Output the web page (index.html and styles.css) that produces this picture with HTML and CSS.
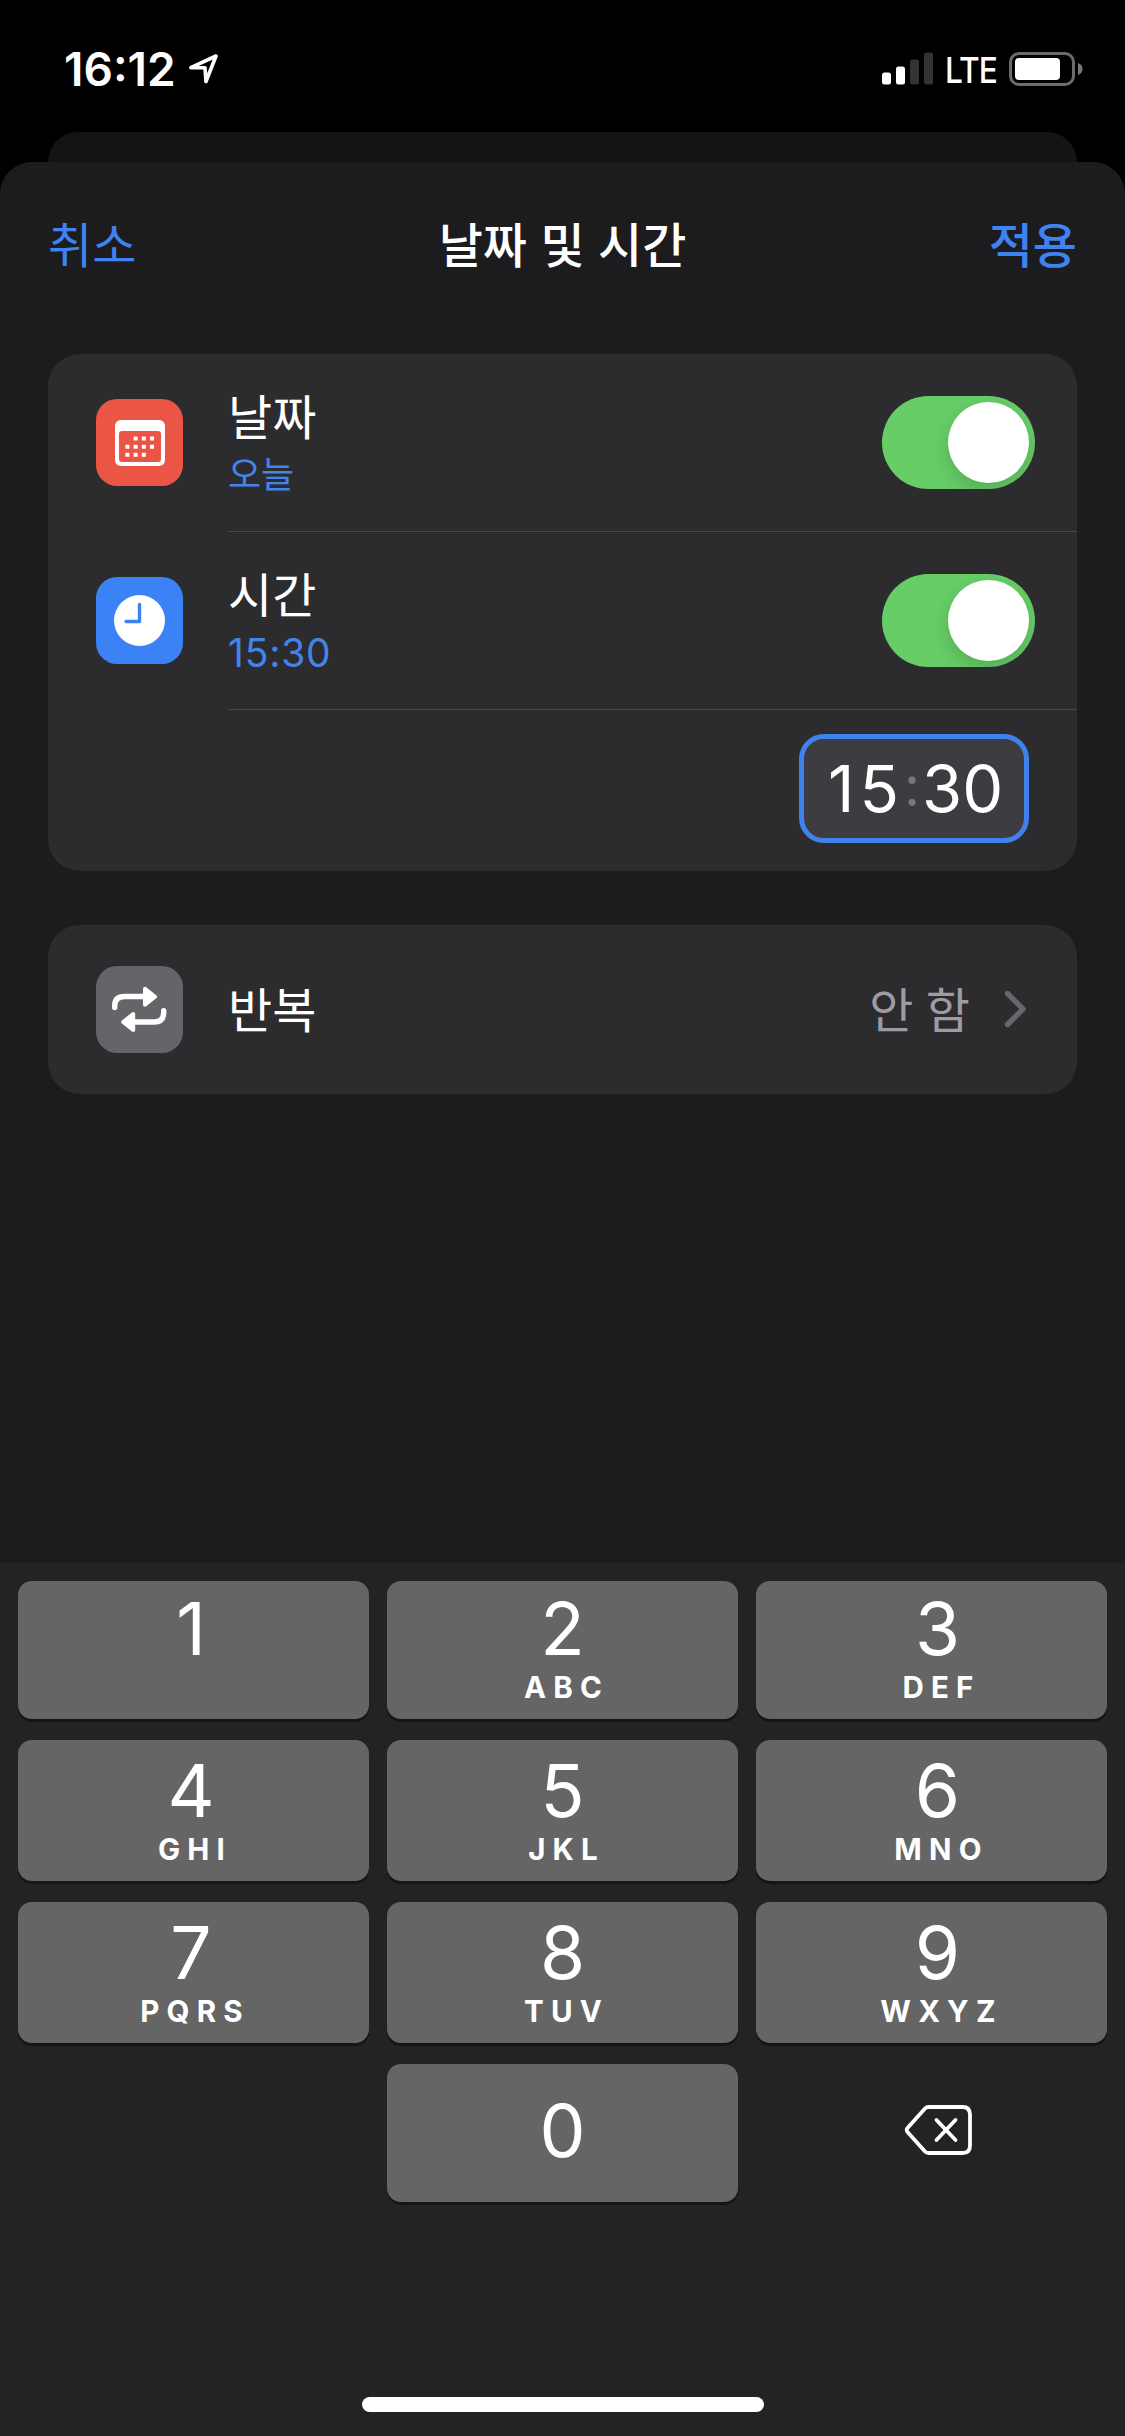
FILE: index.html
```html
<!DOCTYPE html>
<html lang="ko">
<head>
<meta charset="utf-8">
<title>날짜 및 시간</title>
<link rel="stylesheet" href="styles.css">
</head>
<body>
<div class="screen">
  <div class="status">
    <span class="clock">16:12</span>
    <svg class="location" width="33" height="33" viewBox="0 0 33 33"><path d="M3.8 15.6 29 4 19 29.5 18 15.8Z" fill="none" stroke="#fff" stroke-width="3.6" stroke-linejoin="round"/></svg>
    <svg class="signal" width="51" height="33" viewBox="0 0 51 33"><rect y="20.5" width="9" height="12" rx="2.5" fill="#fff"/><rect x="14" y="14.5" width="9" height="18" rx="2.5" fill="#fff"/><rect x="28" y="7.5" width="9" height="25" rx="2.5" fill="#333"/><rect x="42" y=".5" width="9" height="32" rx="2.5" fill="#333"/></svg>
    <span class="network">LTE</span>
    <svg class="battery" width="74" height="34" viewBox="0 0 74 34"><rect x="1.5" y="1.5" width="63" height="31" rx="8.5" fill="none" stroke="#6b6b6b" stroke-width="3"/><rect x="6" y="6" width="45" height="22" rx="4" fill="#fff"/><path d="M69 11q4.500 1.500 4.500 6t-4.500 6z" fill="#777"/></svg>
  </div>
  <div class="back-sheet"></div>
  <main class="sheet">
    <header class="nav">
      <span class="cancel">취소</span>
      <h1 class="title">날짜 및 시간</h1>
      <span class="apply">적용</span>
    </header>
    <section class="card">
      <div class="row">
        <div class="icon red"><svg width="87" height="87" viewBox="0 0 87 87"><path fill="#fff" fill-rule="evenodd" d="M25.500 21H62.500Q69 21 69 27.500V60.500Q69 67 62.500 67H25.500Q19 67 19 60.500V27.500Q19 21 25.500 21ZM26 32Q23 32 23 35V60Q23 63 26 63H62Q65 63 65 60V35Q65 32 62 32Z"/><path stroke="#fff" stroke-width="4" stroke-dasharray="4 4.200" d="M37.600 39.500H60M29.400 47.700H60M29.400 55.700H52"/></svg></div>
        <div class="body"><div class="labels"><span class="label">날짜</span><span class="sub ko">오늘</span></div><span class="switch"><i class="knob"></i></span></div>
      </div>
      <div class="row">
        <div class="icon blue"><svg width="87" height="87" viewBox="0 0 87 87"><circle cx="43.500" cy="43.500" r="25.500" fill="#fff"/><path d="M43.500 27.500V44.500H30" fill="none" stroke="#3b82f4" stroke-width="3.400" stroke-linecap="round" stroke-linejoin="round"/></svg></div>
        <div class="body"><div class="labels"><span class="label">시간</span><span class="sub num">15:30</span></div><span class="switch"><i class="knob"></i></span></div>
      </div>
      <div class="picker"><div class="time"><span class="hour">15</span><span class="colon">:</span><span class="minute">30</span></div></div>
    </section>
    <section class="card repeat">
      <div class="icon gray"><svg width="87" height="87" viewBox="0 0 87 87"><path d="M18.700 41.500V40Q18.700 30.500 28.500 30.500H50M67.700 44.800V46.500Q67.700 56 58 56H37" fill="none" stroke="#fff" stroke-width="5.400" stroke-linecap="round"/><path d="M49 22.800V38.800L59 30.800ZM37.200 48V64L27.200 56Z" fill="#fff" stroke="#fff" stroke-width="4" stroke-linejoin="round"/></svg></div>
      <span class="label">반복</span>
      <span class="value">안 함</span>
      <svg class="chevron" width="24" height="38" viewBox="0 0 24 38"><path d="M3.500 3.500 19 19 3.500 34.500" fill="none" stroke="#68686c" stroke-width="5.400" stroke-linecap="round" stroke-linejoin="round"/></svg>
    </section>
  </main>
  <div class="keyboard">
    <div class="keys">
      <div class="key left"><b>1</b></div>
      <div class="key"><b>2</b><span>ABC</span></div>
      <div class="key right"><b>3</b><span>DEF</span></div>
      <div class="key low left"><b>4</b><span>GHI</span></div>
      <div class="key low"><b>5</b><span>JKL</span></div>
      <div class="key low right"><b>6</b><span>MNO</span></div>
      <div class="key low left"><b>7</b><span>PQRS</span></div>
      <div class="key low"><b>8</b><span>TUV</span></div>
      <div class="key low right"><b>9</b><span>WXYZ</span></div>
      <div></div>
      <div class="key zero"><b>0</b></div>
      <div class="delete"><svg width="70" height="54" viewBox="0 0 70 54"><path d="M24.500 4H58.500Q66 4 66 11.500V42.500Q66 50 58.500 50H24.500Q22.500 50 21 48.500L3.500 29Q2 27 3.500 25L21 5.500Q22.500 4 24.500 4Z" fill="none" stroke="#fff" stroke-width="3.800" stroke-linejoin="round"/><path d="M32.500 17 51.500 37M51.500 17 32.500 37" stroke="#fff" stroke-width="3.800" stroke-linecap="round"/></svg></div>
    </div>
    <div class="home"></div>
  </div>
</div>
</body>
</html>
```
FILE: styles.css
```css
* { box-sizing: border-box; }
body { margin: 0; background: #000; }
.screen {
  display: flex; flex-direction: column;
  width: 1125px; height: 2436px; overflow: hidden;
  background: #000; color: #fff;
  font-family: "Inter", "Noto Sans CJK KR", sans-serif;
}
.status { display: flex; height: 132px; padding: 52px 42px 0 64px; align-items: flex-start; }
.status svg { flex: none; }
.clock { flex: none; width: 123px; font-size: 46px; font-weight: 600; line-height: 35px; white-space: nowrap; }
.signal { margin-left: auto; }
.network { flex: none; width: 63px; margin: 1px 0 0 12px; font-size: 36px; font-weight: 500; line-height: 34px; letter-spacing: -1px; white-space: nowrap; transform: scaleX(.88); transform-origin: left; }
.battery { margin-left: 1px; }
.back-sheet { height: 30px; margin: 0 48px; border-radius: 30px 30px 0 0; background: #141416; }
.sheet { flex: 1; padding: 0 48px; border-radius: 32px 32px 0 0; background: #1c1c1e; }
.nav {
  display: grid; grid-template-columns: 1fr auto 1fr; height: 192px;
  padding-top: 46px; font-size: 48px; line-height: 68px;
  font-family: "Noto Sans CJK KR", sans-serif;
}
.cancel { color: #3e82f3; }
.title { margin: 0; font-size: 48px; font-weight: 500; }
.apply { color: #3e82f3; font-weight: 500; text-align: right; }
.card { border-radius: 32px; background: #2c2c2e; }
.row { display: flex; height: 178px; padding-left: 48px; }
.icon { width: 87px; height: 87px; border-radius: 21px; flex: none; }
.icon svg { display: block; }
.row .icon { margin: 45px 45px 0 0; }
.red { background: #eb5545; }
.blue { background: #3b82f6; }
.gray { background: #656569; }
.body { display: flex; flex: 1; justify-content: space-between; padding: 26px 42px 0 0; border-bottom: 1px solid #48484b; }
.labels { display: flex; flex-direction: column; }
.label { font: 400 48px/68px "Noto Sans CJK KR", sans-serif; }
.sub { color: #4384ec; font-size: 39px; line-height: 48px; white-space: nowrap; }
.ko { font-family: "Noto Sans CJK KR", sans-serif; font-size: 36px; line-height: 48px; }
.num { margin-top: 3px; letter-spacing: .8px; }
.switch { display: flex; justify-content: flex-end; width: 153px; height: 93px; margin-top: 16px; padding: 6px; border-radius: 47px; background: #67ce67; overflow: hidden; }
.knob { width: 81px; height: 81px; border-radius: 50%; background: #fff; box-shadow: 0 8px 20px rgba(0, 0, 0, .17); }
.picker { display: flex; justify-content: flex-end; height: 161px; padding: 24px 48px 0 0; }
.time {
  display: flex; width: 230px; height: 109px; padding-left: 24px;
  border: 5px solid #3f82ee; border-radius: 25px; background: #3d3c41;
  font-size: 65px; line-height: 99px;
}
.hour { width: 75px; letter-spacing: 5px; white-space: nowrap; }
.colon { width: 18px; margin-top: -2px; color: #77767b; font-size: 56px; text-align: center; }
.minute { margin-left: 1px; }
.repeat { display: flex; align-items: center; height: 169px; margin-top: 54px; padding: 0 49px 0 48px; }
.repeat .label { margin: -6px 0 0 45px; }
.value { margin: -6px 0 0 auto; color: #9d9ca4; font: 400 48px/68px "Noto Sans CJK KR", sans-serif; word-spacing: -1px; }
.chevron { margin: -2px 0 0 34px; }
.keyboard { height: 873px; padding-top: 18px; background: #232323; }
.keys { display: grid; grid-template-columns: repeat(3, 351px); grid-template-rows: 138px 141px 141px 138px; gap: 21px 18px; justify-content: center; }
.key { display: flex; flex-direction: column; align-items: center; padding-top: 13px; border-radius: 14px; background: #656565; box-shadow: 0 3px 0 #151515; }
.low { padding-top: 16px; }
.left { padding-right: 5px; }
.right { padding-left: 12px; }
.zero { padding-top: 32px; }
.key b { font-size: 73px; font-weight: 400; line-height: 70px; }
.key span { padding-left: 8px; font-size: 29.5px; font-weight: 650; line-height: 36px; letter-spacing: 7.2px; margin-top: 5px; }
.delete { display: flex; justify-content: center; padding: 39px 0 0 15px; }
.delete svg { display: block; }
.home { width: 402px; height: 15px; margin: 195px auto 0; border-radius: 8px; background: #fff; }
```
